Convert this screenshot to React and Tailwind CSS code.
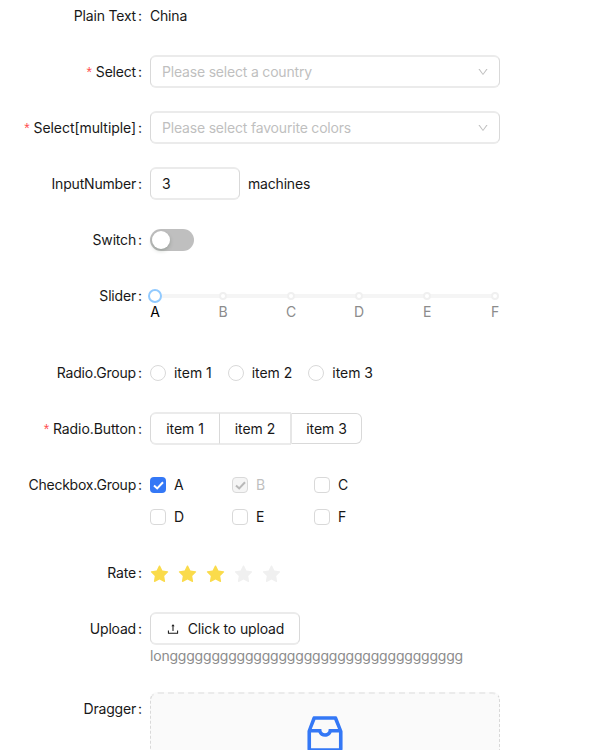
import { AiFillStar, AiOutlineDown, AiOutlineInbox, AiOutlineUpload } from "react-icons/ai";

function Row({ label, labelClass = "", required, height = "h-8", children }) {
  return (
    <div className={`mb-6 flex ${height}`}>
      <div className="mr-2 flex h-8 w-[142px] shrink-0 items-center justify-end whitespace-nowrap">
        {required && <span className="mr-1 font-['Liberation_Sans'] text-[14px] leading-none text-[#ff4d4f]">*</span>}
        <span className={labelClass}>{label}</span>
        <span className="ml-0.5 w-1 text-center">:</span>
      </div>
      <div className="w-[350px] shrink-0">{children}</div>
    </div>
  );
}

const box = "-mt-px h-[33px] rounded-md border-x border-y-2 border-x-[#d9d9d9] border-y-[#ebebeb] bg-white";

function Select({ placeholder }) {
  return (
    <div className={`${box} flex items-center justify-between pl-[11px] pr-[10px] text-[#bfbfbf]`}>
      <span>{placeholder}</span>
      <AiOutlineDown size={12} />
    </div>
  );
}

function Mark({ letter, active }) {
  return (
    <div className="flex w-[10px] flex-col items-center">
      <div className="flex h-4 items-center justify-center">
        {active ? (
          <span className="size-[14px] shrink-0 rounded-full border-2 border-[#91caff] bg-white" />
        ) : (
          <span className="size-2 shrink-0 rounded-full border-2 border-[#f0f0f0] bg-white" />
        )}
      </div>
      <span className={`leading-4 ${active ? "text-black" : "text-[#8c8c8c]"}`}>{letter}</span>
    </div>
  );
}

function Check({ label, checked, disabled }) {
  const tone = disabled
    ? "border border-[#d9d9d9] bg-[#f5f5f5]"
    : checked
      ? "bg-[#3478f6]"
      : "border border-[#d9d9d9] bg-white";
  return (
    <div className="flex h-8 w-[82px] items-center gap-2">
      <span className={`flex size-4 items-center justify-center rounded ${tone}`}>
        {checked && (
          <svg width="11" height="9" viewBox="0 0 11 9" fill="none" className="shrink-0">
            <path d="M1 4.4 4.2 7.4 10 1.2" stroke={disabled ? "#b8b8b8" : "#fff"} strokeWidth="2" />
          </svg>
        )}
      </span>
      <span className={disabled ? "text-[#bfbfbf]" : ""}>{label}</span>
    </div>
  );
}

export default function App() {
  return (
    <div className="h-[750px] w-[600px] overflow-hidden bg-white font-['Inter',sans-serif] text-[14px] leading-[22px] tracking-[-0.19px] text-[#181818]">
      <Row label="Plain Text">
        <div className="flex h-8 items-center">China</div>
      </Row>
      <Row label="Select" required>
        <Select placeholder="Please select a country" />
      </Row>
      <Row label="Select[multiple]" labelClass="tracking-[-0.07px]" required>
        <Select placeholder="Please select favourite colors" />
      </Row>
      <Row label="InputNumber">
        <div className="flex items-center gap-2">
          <div className={`${box} flex w-[90px] items-center px-[11px]`}>3</div>
          <span>machines</span>
        </div>
      </Row>
      <Row label="Switch">
        <div className="flex h-8 items-center">
          <div className="flex h-[22px] w-11 items-center rounded-full bg-[#bfbfbf] px-0.5">
            <span className="size-[18px] rounded-full bg-white shadow-[0_2px_4px_rgba(0,35,11,0.2)]" />
          </div>
        </div>
      </Row>
      <Row label="Slider" height="h-[53px]">
        <div className="grid pt-2">
          <div className="col-start-1 row-start-1 mx-[5px] mt-1.5 h-1 rounded-sm bg-[#f5f5f5]" />
          <div className="z-10 col-start-1 row-start-1 flex justify-between">
            {["A", "B", "C", "D", "E", "F"].map((l) => (
              <Mark key={l} letter={l} active={l === "A"} />
            ))}
          </div>
        </div>
      </Row>
      <Row label="Radio.Group">
        <div className="flex h-8 items-center tracking-[-0.03px]">
          {["item 1", "item 2", "item 3"].map((t) => (
            <div key={t} className="mr-4 flex items-center gap-2">
              <span className="size-4 rounded-full border border-[#d9d9d9]" />
              <span>{t}</span>
            </div>
          ))}
        </div>
      </Row>
      <Row label="Radio.Button" labelClass="tracking-[-0.08px]" required>
        <div className="flex tracking-[-0.03px]">
          <div className="-mt-px flex h-[33px] w-[70px] items-center justify-center rounded-l-md border-x border-y-2 border-x-[#d9d9d9] border-y-[#ebebeb]">item 1</div>
          <div className="-mt-px flex h-[33px] w-[71px] items-center justify-center border-y-2 border-r border-r-[#e6e6e6] border-y-[#ebebeb]">item 2</div>
          <div className="flex h-[31px] w-[71px] items-center justify-center rounded-r-md border border-[#d9d9d9] border-l-[#e6e6e6]">item 3</div>
        </div>
      </Row>
      <Row label="Checkbox.Group" labelClass="tracking-[-0.23px]" height="h-16">
        <div className="flex flex-wrap">
          <Check label="A" checked />
          <Check label="B" checked disabled />
          <Check label="C" />
          <div className="basis-full" />
          <Check label="D" />
          <Check label="E" />
          <Check label="F" />
        </div>
      </Row>
      <Row label="Rate">
        <div className="-ml-px flex h-8 items-center gap-[7px] pt-[3px]">
          {[0, 1, 2, 3, 4].map((i) => (
            <AiFillStar key={i} size={21} className={i < 3 ? "text-[#fadb4b]" : "text-[#f0f0f0]"} />
          ))}
        </div>
      </Row>
      <Row label="Upload" height="h-14">
        <div className={`${box} flex w-[150px] items-center justify-center gap-2 tracking-[-0.14px]`}>
          <AiOutlineUpload size={14} />
          <span>Click to upload</span>
        </div>
        <div className="whitespace-nowrap text-[#8c8c8c] tracking-[-0.2px]">longgggggggggggggggggggggggggggggggggg</div>
      </Row>
      <Row label="Dragger" height="h-40">
        <div className="-mt-px flex h-40 justify-center rounded-lg border border-t-2 border-dashed border-[#d9d9d9] border-t-[#ebebeb] bg-[#fafafa] pt-4">
          <AiOutlineInbox size={48} className="text-[#3478f6]" />
        </div>
      </Row>
    </div>
  );
}
